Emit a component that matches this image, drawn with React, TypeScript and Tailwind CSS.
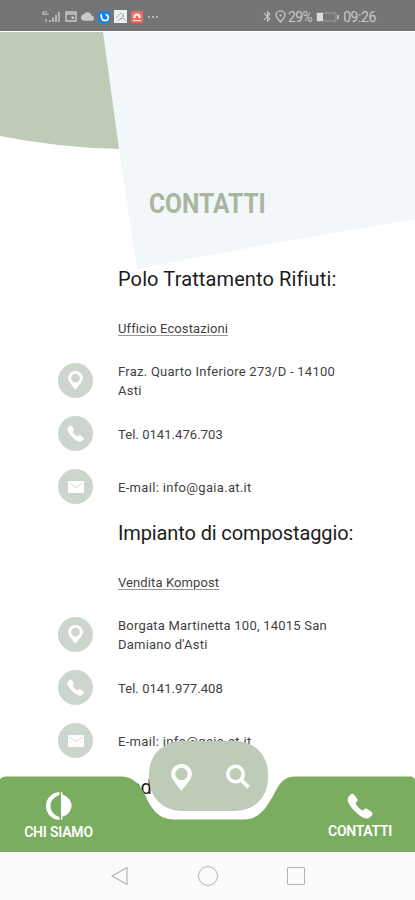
import type { ReactNode } from 'react';
import { MdBluetooth, MdCloud } from 'react-icons/md';

type ContactKind = 'address' | 'phone' | 'email';

type Office = {
  name: string;
  tracking: string;
  link: string;
  contacts: { kind: ContactKind; text: ReactNode; tracking: string }[];
};

const offices: Office[] = [
  {
    name: 'Polo Trattamento Rifiuti:',
    tracking: 'tracking-[0.12px]',
    link: 'Ufficio Ecostazioni',
    contacts: [
      { kind: 'address', text: <>Fraz. Quarto Inferiore 273/D - 14100<br />Asti</>, tracking: 'tracking-[0.26px]' },
      { kind: 'phone', text: 'Tel. 0141.476.703', tracking: 'tracking-[0.06px]' },
      { kind: 'email', text: 'E-mail: info@gaia.at.it', tracking: 'tracking-[0.32px]' },
    ],
  },
  {
    name: 'Impianto di compostaggio:',
    tracking: 'tracking-[-0.12px]',
    link: 'Vendita Kompost',
    contacts: [
      { kind: 'address', text: <>Borgata Martinetta 100, 14015 San<br />Damiano d'Asti</>, tracking: 'tracking-[0.22px]' },
      { kind: 'phone', text: 'Tel. 0141.977.408', tracking: 'tracking-[0.06px]' },
      { kind: 'email', text: 'E-mail: info@gaia.at.it', tracking: 'tracking-[0.32px]' },
    ],
  },
];

function PinIcon({ className }: { className?: string }) {
  return (
    <svg viewBox="0 0 20 26" className={className} fill="currentColor" fillRule="evenodd">
      <path d="M10 0C4.4 0 0 4.3 0 9.7C0 14.6 4.3 18.3 10 26C15.7 18.3 20 14.6 20 9.7C20 4.3 15.6 0 10 0ZM10 3.7A6 6 0 1 1 10 15.7A6 6 0 0 1 10 3.7Z" />
    </svg>
  );
}

function PhoneIcon({ className }: { className?: string }) {
  return (
    <svg viewBox="0 0 26 26" className={className} fill="currentColor" stroke="currentColor" strokeWidth="1" strokeLinejoin="round">
      <path d="M3 2.500C4.500 1 6.500 0.800 7.500 2.500L9.800 6C10.600 7.500 10 8.500 8.700 9.500C8 10.300 8.300 11 9 12C10.500 14.200 12 15.800 14.200 17.200C15.200 17.900 16 18 16.700 17.300C17.700 16 18.800 15.600 20.200 16.400L24 18.800C25.500 19.900 25.300 21.800 23.800 23.200C21.500 25.500 18.500 25.600 15 23.600C10.500 21 5.500 16 2.500 10.800C0.500 7.500 0.700 4.800 3 2.500Z" />
    </svg>
  );
}

function MailIcon({ className }: { className?: string }) {
  return (
    <svg viewBox="0 0 16 12" className={className}>
      <rect width="16" height="12" rx="1.2" fill="currentColor" />
      <path d="M1.5 1.8L8 6.8L14.5 1.8" fill="none" stroke="#cdd6cd" strokeWidth="0.9" />
    </svg>
  );
}

function ContactIcon({ kind }: { kind: ContactKind }) {
  return (
    <div className="w-[35px] h-[35px] shrink-0 rounded-full bg-[#cdd6cd] text-white flex items-center justify-center">
      {kind === 'address' && <PinIcon className="w-[15px] h-[19px]" />}
      {kind === 'phone' && <PhoneIcon className="w-[17px] h-[17px]" />}
      {kind === 'email' && <MailIcon className="w-4 h-3" />}
    </div>
  );
}

function StatusBar() {
  return (
    <header className="h-[31px] shrink-0 bg-[#757575] text-[#c9c9c9] flex items-center justify-between pl-[41px] pr-[39px] pt-[2px]">
      <div className="flex items-center">
        <svg viewBox="0 0 20 14" className="w-5 h-3.5" fill="currentColor">
          <path d="M1 4L3 1V5.5M1 4H4M6 1.5H5V4.5H7V3" fill="none" stroke="currentColor" strokeWidth="0.8" />
          <path d="M8 10h2v2H8zM11 7.5h2V12h-2zM14 5h2v7h-2zM17 2h1.8v10H17z" opacity="0.8" />
          <path d="M4 9h2v3H4z" opacity="0.6" />
        </svg>
        <svg viewBox="0 0 12 11" className="w-3 h-[11px] ml-1" fill="none" stroke="currentColor" strokeWidth="1.4">
          <path d="M1 1H11V10H1ZM1 3H11" />
          <path d="M6.5 5.5H9V8H6.5Z" fill="currentColor" stroke="none" />
        </svg>
        <MdCloud size={13} className="ml-[4px]" />
        <span className="ml-[4px] w-[12px] h-[12px] rounded-[4px] bg-[#1683e6] flex items-center justify-center">
          <svg viewBox="0 0 10 10" className="w-2.5 h-2.5">
            <path d="M2.2 2.2C2 6 3 8.5 6 8.5A3 3 0 0 0 6.5 2.5" fill="none" stroke="white" strokeWidth="1.7" />
          </svg>
        </span>
        <span className="ml-[4px] w-[13px] h-[13px] bg-[#eceff0] flex items-center justify-center">
          <svg viewBox="0 0 12 12" className="w-3 h-3" fill="none" stroke="#a5b3bb" strokeWidth="1">
            <path d="M1 7L6 2L9 5L3 10M5 8L8 7L11 10M8 3V6" />
          </svg>
        </span>
        <span className="ml-[4px] w-[12px] h-[12px] rounded-[2px] bg-[#ee6b62] flex items-center justify-center">
          <svg viewBox="0 0 12 12" className="w-3 h-3" fill="none" stroke="white">
            <path d="M3.500 7V6A2.500 2.500 0 0 1 8.500 6V7" strokeWidth="2.200" />
            <path d="M2 9.5H10" strokeWidth="0.8" />
          </svg>
        </span>
        <span className="ml-[5px] flex gap-[2px]">
          <i className="w-[2px] h-[2px] bg-[#b5b5b5]" />
          <i className="w-[2px] h-[2px] bg-[#b5b5b5]" />
          <i className="w-[2px] h-[2px] bg-[#b5b5b5]" />
        </span>
      </div>

      <div className="flex items-center text-[14px] leading-none">
        <MdBluetooth size={13} />
        <svg viewBox="0 0 11 13" className="w-[11px] h-[13px] ml-px" fill="none" stroke="currentColor" strokeWidth="1.3">
          <path d="M5.5 12C3 9 1 7.5 1 5.3A4.5 4.5 0 0 1 10 5.3C10 7.5 8 9 5.5 12Z" />
          <circle cx="5.5" cy="5.3" r="1.1" fill="currentColor" stroke="none" />
        </svg>
        <span className="ml-[2px] tracking-[-0.6px]">29%</span>
        <svg viewBox="0 0 24 10" className="w-6 h-2.5 ml-[4px]">
          <path d="M1 1H20V9H1Z" fill="none" stroke="#a0a0a0" strokeWidth="1" />
          <path d="M1 1H7V9H1Z" fill="#dcdcdc" />
          <path d="M21 3H23V7H21Z" fill="#bcbcbc" />
        </svg>
        <span className="ml-[3px] tracking-[-0.4px]">09:26</span>
      </div>
    </header>
  );
}

function OfficeSection({ office }: { office: Office }) {
  return (
    <section className="h-[254px]">
      <h2 className={`ml-[118px] h-7 leading-7 text-[20px] text-[#1c1c1c] whitespace-nowrap ${office.tracking}`}>{office.name}</h2>
      <p className="ml-[118px] mt-[26px] h-[18px] leading-[20px] text-[13px] tracking-[0.1px]">
        <a className="underline decoration-[#999] underline-offset-2">{office.link}</a>
      </p>
      <ul className="mt-[17px]">
        {office.contacts.map((contact) => (
          <li key={contact.kind} className="h-[53px] pl-[58px] flex items-center gap-[25px]">
            <ContactIcon kind={contact.kind} />
            <p className={`pt-px text-[13px] leading-[19px] whitespace-nowrap ${contact.tracking}`}>{contact.text}</p>
          </li>
        ))}
      </ul>
    </section>
  );
}

function TabBar() {
  return (
    <nav className="absolute inset-x-0 bottom-0 h-[111px] text-white">
      <svg viewBox="0 0 415 76" className="absolute inset-x-0 bottom-0 w-full h-[76px]" fill="#7bad60">
        <path d="M0 3Q2 0.5 5 0.5H122C133 0.5 140 9 145 19C151 32 158 43.5 174 43.5H244C259 43.5 266 32 273 20C279 8 283 0.5 296 0.5H411Q414 0.5 415 4V76H0Z" />
      </svg>
      <div className="relative h-full flex justify-between">
        <div className="w-[117px] pt-[51px] flex flex-col items-center">
          <svg viewBox="0 0 26 28" className="w-[26px] h-7" fill="currentColor">
            <path d="M13.500 0C5.500 0.500 0 6.500 0 14S5.500 27.500 13.500 28V25C8 23 4.500 19.500 4.500 14S8 5 13.500 3Z" />
            <path d="M15 0V28L16.500 27.500V24.500L20.500 23L23.500 20L25.500 15.500V12L23.500 7.500L20.500 4.500L16.500 2.500V0.500Z" />
          </svg>
          <span className="mt-[2px] text-[14px] leading-[20px] font-semibold whitespace-nowrap tracking-[-0.2px]">CHI SIAMO</span>
        </div>
        <div className="w-[119px] h-[70px] rounded-[32px] ml-[32px] bg-[#becbb6] flex items-center justify-between pl-[22px] pr-[18px] pt-[2px]">
          <PinIcon className="w-[21px] h-[27px]" />
          <svg viewBox="0 0 24 26" className="w-6 h-[26px]" fill="none" stroke="currentColor" strokeWidth="3.500">
            <circle cx="9.500" cy="10" r="7.700" />
            <path d="M15 15.500L22.500 23.500" strokeWidth="4" />
          </svg>
        </div>
        <div className="w-[110px] ml-[37px] pt-[52px] flex flex-col items-center">
          <PhoneIcon className="w-[26px] h-[26px] -ml-px" />
          <span className="mt-[2px] text-[14px] leading-[20px] font-semibold whitespace-nowrap tracking-[-0.3px]">CONTATTI</span>
        </div>
      </div>
    </nav>
  );
}

function AndroidNav() {
  return (
    <footer className="h-12 shrink-0 bg-[#fafafa] flex items-center justify-center gap-[69px]">
      <svg viewBox="0 0 18 20" className="w-[18px] h-5" fill="none" stroke="#b4b4b4" strokeWidth="1.2">
        <path d="M16 1.500V18.500L1 10Z" strokeLinejoin="round" />
      </svg>
      <div className="w-5 h-5 rounded-full border border-[#b4b4b4]" />
      <div className="w-[18px] h-[18px] rounded-[1px] border border-[#b4b4b4]" />
    </footer>
  );
}

export default function App() {
  return (
    <div className="w-full h-[900px] flex flex-col overflow-hidden bg-white text-[#3f3f3f] font-[Roboto,sans-serif]">
      <StatusBar />
      <main className="relative flex-1 overflow-hidden">
        <svg viewBox="0 0 415 821" className="absolute inset-0 w-full h-full">
          <path d="M0 1H110L121 118Q60 117 0 105Z" fill="#becbb6" />
          <path d="M103 1H415V188Q276 211 137 238L127 172L119 118Z" fill="#f2f7fa" />
        </svg>
        <div className="relative pt-[155px]">
          <h1 className="ml-[149px] h-9 leading-9 text-[27px] font-bold text-[#a9b59f] origin-left scale-x-91 whitespace-nowrap">CONTATTI</h1>
          <div className="mt-[43px]">
            {offices.map((office) => (
              <OfficeSection key={office.name} office={office} />
            ))}
            <h2 className="ml-[118px] h-7 leading-7 text-[20px] text-[#1c1c1c]">Sede</h2>
          </div>
        </div>
        <TabBar />
      </main>
      <AndroidNav />
    </div>
  );
}
